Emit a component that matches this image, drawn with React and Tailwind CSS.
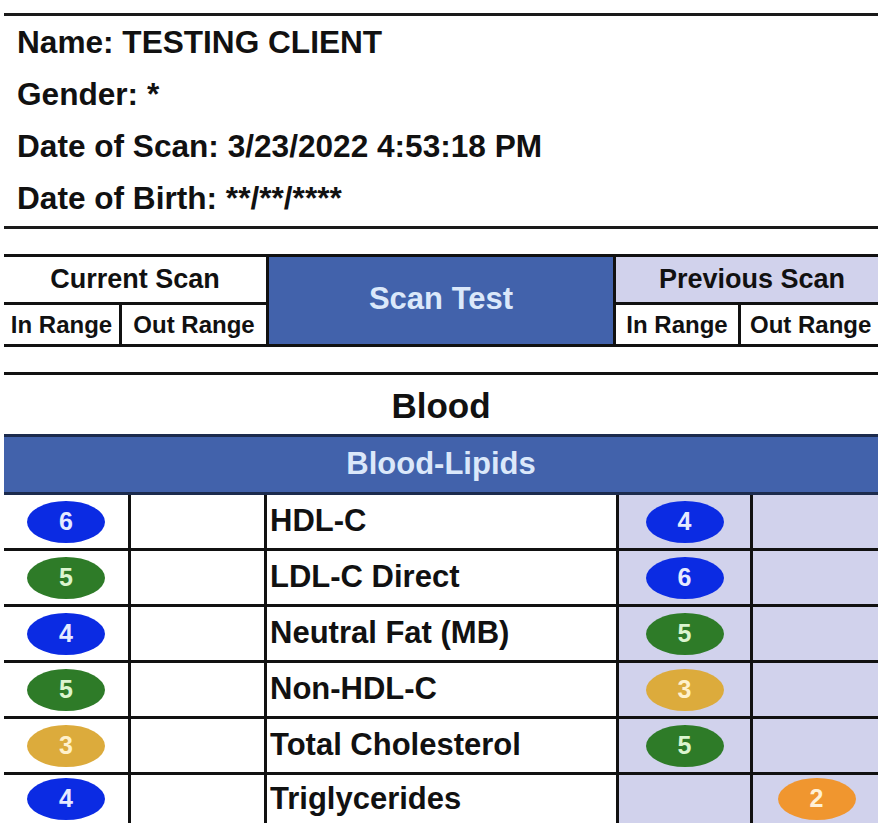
const info = [
  "Name: TESTING CLIENT",
  "Gender: *",
  "Date of Scan: 3/23/2022 4:53:18 PM",
  "Date of Birth: **/**/****",
];

const badgeStyles = {
  blue: "bg-[#0b2be3] text-[#e6eaff]",
  green: "bg-[#2e7b28] text-[#dcf5cf]",
  gold: "bg-[#dcab3c] text-[#fff1cc]",
  orange: "bg-[#f0962f] text-[#fff0d6]",
};

const rows = [
  { name: "HDL-C", cur: [6, "blue"], prevIn: [4, "blue"] },
  { name: "LDL-C Direct", cur: [5, "green"], prevIn: [6, "blue"] },
  { name: "Neutral Fat (MB)", cur: [4, "blue"], prevIn: [5, "green"] },
  { name: "Non-HDL-C", cur: [5, "green"], prevIn: [3, "gold"] },
  { name: "Total Cholesterol", cur: [3, "gold"], prevIn: [5, "green"] },
  { name: "Triglycerides", cur: [4, "blue"], prevOut: [2, "orange"] },
];

function Badge({ value, color }) {
  return (
    <div
      className={`w-[78px] h-[42px] rounded-[50%] flex items-center justify-center text-[25px] font-bold ${badgeStyles[color]}`}
    >
      {value}
    </div>
  );
}

export default function App() {
  return (
    <div className="w-[878px] h-[824px] overflow-hidden bg-white text-[#111] font-['Liberation_Sans',Arial,sans-serif] pt-[13px]">
      {/* Client info */}
      <div className="ml-1 border-y-[3px] border-[#1a1a1a] pl-[13px] pb-[2px]">
        {info.map((line) => (
          <div key={line} className="text-[31.6px] leading-[52px] font-bold whitespace-nowrap">
            {line}
          </div>
        ))}
      </div>

      {/* Column header */}
      <div className="ml-1 mt-[25px] border-y-[3px] border-[#111] flex">
        <div className="w-[262px] flex flex-col">
          <div className="h-[48px] border-b-[3px] border-[#111] flex items-center justify-center text-[27px] font-bold">
            Current Scan
          </div>
          <div className="h-[39px] flex text-[24px] font-bold">
            <div className="w-[118px] border-r-[3px] border-[#111] flex items-center justify-center whitespace-nowrap">
              In Range
            </div>
            <div className="flex-1 flex items-center justify-center whitespace-nowrap">
              Out Range
            </div>
          </div>
        </div>
        <div className="w-[350px] border-x-[3px] border-[#111] bg-[#4262ab] flex items-center justify-center text-[31px] font-bold text-[#dbe8fa] pb-[2px]">
          Scan Test
        </div>
        <div className="flex-1 flex flex-col">
          <div className="h-[48px] border-b-[3px] border-[#111] bg-[#d1d2ec] flex items-center justify-center pl-[10px] text-[27px] font-bold whitespace-nowrap">
            Previous Scan
          </div>
          <div className="h-[39px] flex text-[24px] font-bold">
            <div className="w-[125px] border-r-[3px] border-[#111] flex items-center justify-center whitespace-nowrap">
              In Range
            </div>
            <div className="flex-1 flex items-center pl-[9px] whitespace-nowrap overflow-hidden">
              Out Range
            </div>
          </div>
        </div>
      </div>

      {/* Section */}
      <div className="ml-1 mt-[25px] border-t-[3px] border-[#111] h-[62px] flex items-center justify-center text-[35px] font-bold pt-[3px]">
        Blood
      </div>
      <div className="ml-1 h-[61px] border-y-[3px] border-[#1c2b4d] bg-[#4262ab] flex items-center justify-center text-[31px] font-bold text-[#dbe8fa]">
        Blood-Lipids
      </div>

      {/* Results */}
      {rows.map((r, i) => (
        <div
          key={r.name}
          className={`ml-1 grid grid-cols-[127px_136px_352px_134px_1fr] ${
            i < rows.length - 1 ? "h-[56px] border-b-[3px] border-[#111]" : "h-[48px]"
          }`}
        >
          <div className="border-r-[3px] border-[#111] flex items-center justify-center">
            <Badge value={r.cur[0]} color={r.cur[1]} />
          </div>
          <div className="border-r-[3px] border-[#111]" />
          <div className="border-r-[3px] border-[#111] flex items-center pl-[3px] text-[31px] font-bold whitespace-nowrap">
            {r.name}
          </div>
          <div className="border-r-[3px] border-[#111] bg-[#d1d2ec] flex items-center justify-center">
            {r.prevIn && <Badge value={r.prevIn[0]} color={r.prevIn[1]} />}
          </div>
          <div className="bg-[#d1d2ec] flex items-center justify-center pl-[2px]">
            {r.prevOut && <Badge value={r.prevOut[0]} color={r.prevOut[1]} />}
          </div>
        </div>
      ))}
    </div>
  );
}
